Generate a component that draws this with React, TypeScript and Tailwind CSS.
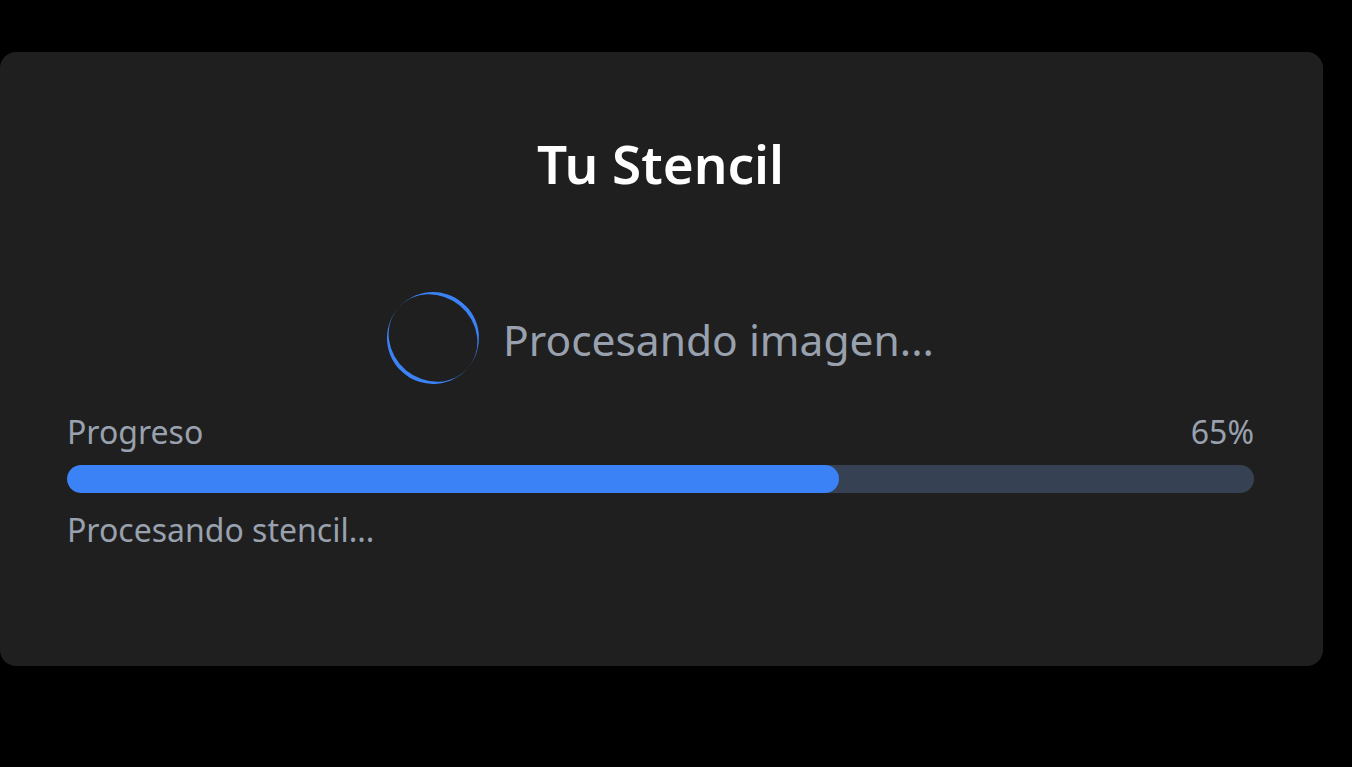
export default function App() {
  const progress = 65;

  return (
    <div className="min-h-screen bg-black pt-[52px] font-['Noto_Sans',sans-serif]">
      <div className="flex h-[614px] w-[1323px] flex-col rounded-2xl bg-[#1f1f1f] pl-[67px] pr-[69px]">
        {/* Title */}
        <h1 className="mt-[76px] h-[72px] text-center text-[53px] font-semibold leading-[72px] text-white">
          Tu Stencil
        </h1>

        {/* Spinner + status */}
        <div className="mt-[92px] flex items-center justify-center gap-6">
          <div className="h-[92px] w-[92px] rotate-[40deg] rounded-full border-x-0 border-y-4 border-solid border-[#3b82f6]" />
          <span className="pt-1 text-[42.5px] leading-[60px] text-gray-400">Procesando imagen...</span>
        </div>

        {/* Progress */}
        <div className="mt-[28px] flex h-10 items-center justify-between text-[32px] leading-10 text-gray-400">
          <span>Progreso</span>
          <span>{progress}%</span>
        </div>
        <div className="mt-[13px] h-7 w-full overflow-hidden rounded-full bg-gray-700">
          <div className="h-full rounded-full bg-[#3b82f6]" style={{ width: `${progress}%` }} />
        </div>
        <p className="mt-[17px] h-10 text-[32px] leading-10 text-gray-400">Procesando stencil...</p>
      </div>
    </div>
  );
}
